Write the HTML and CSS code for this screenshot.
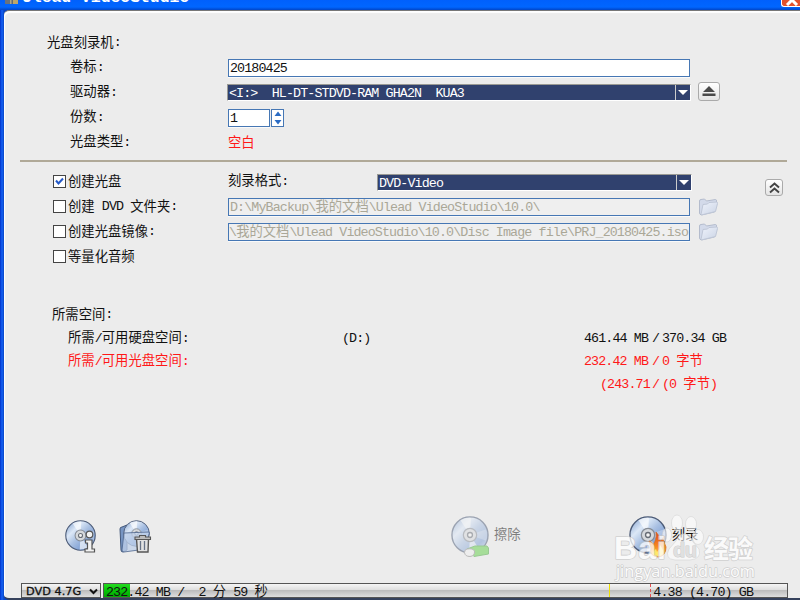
FILE: index.html
```html
<!DOCTYPE html>
<html lang="zh-CN">
<head>
  <meta charset="UTF-8" />
  <title>Ulead VideoStudio</title>
  <link rel="stylesheet" href="styles.css">
</head>
<body>

  <!-- shared disc artwork -->
  <svg class="defs" width="0" height="0">
    <defs>
      <linearGradient id="discFill" x1="0" y1="0" x2="1" y2="1">
        <stop offset="0" stop-color="#7697c9" />
        <stop offset=".3" stop-color="#dce8f7" />
        <stop offset=".5" stop-color="#a9c0e2" />
        <stop offset=".75" stop-color="#7c9ed4" />
        <stop offset="1" stop-color="#d6e3f5" />
      </linearGradient>
      <linearGradient id="folderFill" x1="0" y1="0" x2="1" y2="1">
        <stop offset="0" stop-color="#eef2fb" />
        <stop offset="1" stop-color="#cbd4e5" />
      </linearGradient>
      <linearGradient id="flame" x1="0" y1="0" x2="0" y2="1">
        <stop offset="0" stop-color="#d9481c" />
        <stop offset=".6" stop-color="#f98b1f" />
        <stop offset="1" stop-color="#ffd65a" />
      </linearGradient>
      <symbol id="disc" viewBox="0 0 40 40">
        <circle cx="20" cy="20" r="19" fill="url(#discFill)" stroke="#4c5b77" stroke-width="1.4" />
        <path d="M20 20 10 4.500Q15 1.500 21 2ZM20 20 30 35.500Q25 38 19 38Z" fill="#fff" opacity=".65" />
        <path d="M20 20 37 14Q39 20 37 26Z" fill="#fff" opacity=".3" />
        <circle cx="20" cy="20" r="7" fill="#d5d8dc" stroke="#858b95" stroke-width="1.300" />
        <circle cx="20" cy="20" r="2.600" fill="#f4f4f4" stroke="#666c75" stroke-width="1.400" />
      </symbol>
      <symbol id="folder" viewBox="0 0 20 18">
        <path d="M1 3Q1 1.500 2.500 1.500L6 1 8 3 17 1.500Q18 1.500 18 3V5L16 14 3 17Q1 16.500 1 15Z" fill="#d3daea" stroke="#b4bccd" />
        <path d="M4.500 6.500 9 6 10.500 4.500 18 4Q19.300 4 19 5.500L17 13.500 3.500 16.800Q2.500 16.800 2.700 15.500Z" fill="url(#folderFill)" stroke="#bfc7d7" />
      </symbol>
    </defs>
  </svg>

  <header class="titlebar">
    <div class="app-icon"></div>
    <div class="app-title">Ulead VideoStudio</div>
    <div class="close">
      <svg width="16" height="12" viewBox="0 0 16 12"><path d="M3 0 13 10M13 0 3 10" stroke="#fff" stroke-width="3" /></svg>
    </div>
  </header>

  <main class="panel">
    <section class="burner">
      <div class="row heading">光盘刻录机<i>:</i></div>
      <div class="row">
        <div class="label">卷标<i>:</i></div>
        <div class="field"><i>20180425</i></div>
      </div>
      <div class="row">
        <div class="label">驱动器<i>:</i></div>
        <div class="combo">
          <div class="combo-text"><i>&lt;I:&gt;  HL-DT-STDVD-RAM GHA2N  KUA3</i></div>
          <div class="combo-arrow"></div>
        </div>
        <div class="button eject">
          <svg width="14" height="11" viewBox="0 0 14 11"><path d="M7 0 13 6H1ZM.5 7.500h13v2.500H.5z" fill="#4a4a4a" /></svg>
        </div>
      </div>
      <div class="row">
        <div class="label">份数<i>:</i></div>
        <div class="field copies"><i>1</i></div>
        <div class="spinner">
          <svg width="8" height="14" viewBox="0 0 8 14"><path d="M4 .5 7.500 5H.5ZM4 13.500 7.500 9H.5Z" fill="#2a6bc4" /></svg>
        </div>
      </div>
      <div class="row">
        <div class="label">光盘类型<i>:</i></div>
        <div class="red">空白</div>
      </div>
    </section>

    <hr>

    <section class="output">
      <div class="row">
        <div class="check">
          <div class="box"><svg width="9" height="9" viewBox="0 0 9 9"><path d="M1 3.500 3.500 6.500 8 1.500" fill="none" stroke="#2459c8" stroke-width="2" /></svg></div>
          创建光盘
        </div>
        <div class="format-label">刻录格式<i>:</i></div>
        <div class="combo format">
          <div class="combo-text"><i>DVD-Video</i></div>
          <div class="combo-arrow"></div>
        </div>
        <div class="button collapse">
          <svg width="11" height="12" viewBox="0 0 11 12"><path d="M1 5.500 5.500 1.500 10 5.500M1 10.500 5.500 6.500 10 10.500" fill="none" stroke="#444" stroke-width="1.900" /></svg>
        </div>
      </div>
      <div class="row">
        <div class="check"><div class="box"></div>创建<i> DVD </i>文件夹<i>:</i></div>
        <div class="field disabled"><i>D:\MyBackup\</i>我的文档<i>\Ulead VideoStudio\10.0\</i></div>
        <svg class="folder" width="21" height="18"><use href="#folder" /></svg>
      </div>
      <div class="row">
        <div class="check"><div class="box"></div>创建光盘镜像<i>:</i></div>
        <div class="field disabled scrolled"><i>\</i>我的文档<i>\Ulead VideoStudio\10.0\Disc Image file\PRJ_20180425.iso</i></div>
        <svg class="folder" width="21" height="18"><use href="#folder" /></svg>
      </div>
      <div class="row">
        <div class="check"><div class="box"></div>等量化音频</div>
      </div>
    </section>

    <section class="space">
      <div class="space-row title">所需空间<i>:</i></div>
      <div class="space-row">
        <div class="space-name">所需<i>/</i>可用硬盘空间<i>:</i></div>
        <div class="drive"><i>(D:)</i></div>
        <div class="need"><i>461.44 MB</i></div>
        <div class="slash"><i>/</i></div>
        <div><i>370.34 GB</i></div>
      </div>
      <div class="space-row red">
        <div class="space-name">所需<i>/</i>可用光盘空间<i>:</i></div>
        <div class="drive"></div>
        <div class="need"><i>232.42 MB</i></div>
        <div class="slash"><i>/</i></div>
        <div><i>0 </i>字节</div>
      </div>
      <div class="space-row red">
        <div class="space-name"></div>
        <div class="drive"></div>
        <div class="need right"><i>(243.71</i></div>
        <div class="slash"><i>/</i></div>
        <div><i>(0 </i>字节<i>)</i></div>
      </div>
    </section>

    <section class="actions">
      <svg class="info" width="34" height="36" viewBox="0 0 34 36">
        <use href="#disc" x="1" y="1" width="31" height="31" />
        <g fill="#f2f2f2" stroke="#555" stroke-width="1.200">
          <circle cx="25.500" cy="15.500" r="3.300" />
          <path d="M21.500 21h6.500v9H30.500V33H21v-3H23.500V24H21.500Z" />
        </g>
      </svg>
      <svg class="clean" width="34" height="36" viewBox="0 0 34 36">
        <path d="M2 10Q2 8 4 8L9 6V31L5 33Q3 33 3 31Z" fill="#7795c3" stroke="#42577a" />
        <use href="#disc" x="5" y="1" width="27" height="27" />
        <path d="M6 14 31 13Q32 14 31 15L28 30 6 33Q4 33 4 31Z" fill="#bfd0ea" fill-opacity=".75" stroke="#4d658d" stroke-width=".8" />
        <path d="M18.500 20h12l-.5 13H19.500Z" fill="#e2e2e2" stroke="#555" stroke-width="1.400" />
        <path d="M17 20.500v-2.500h4.500V16.500h6v1.500H32.500v2.500Z" fill="#bcbcbc" stroke="#555" stroke-width="1.100" />
        <path d="M22.500 22v9M26.500 22v9" stroke="#667286" stroke-width="1.300" />
      </svg>
      <div class="erase">
        <svg width="41" height="42" viewBox="0 0 41 42">
          <use href="#disc" x="1" y="0" width="38" height="38" />
          <path d="M17 33 25 30 37 30 38.500 32V38L24 40.500Z" fill="#62d048" stroke="#47a83a" />
          <path d="M17 33Q23 32 24.500 35 25 40 20 40.500 15 40.500 14.500 36.500 14.500 33.500 17 33Z" fill="#eee" stroke="#888" />
        </svg>
        <span>擦除</span>
      </div>
      <div class="burn">
        <svg width="41" height="42" viewBox="0 0 41 42">
          <use href="#disc" x="1" y="0" width="38" height="38" />
          <path d="M21 25Q25 26 25 29 29 24 28 16 33 21 32 26L36 20Q35 26 38 31 38 40 30 41 21 40 23 32Z" fill="url(#flame)" stroke="#d76a24" stroke-width=".8" />
          <path d="M26 40Q24 36 28 33L29 36Q32 33 32 29 36 34 35 38 32 41 26 40Z" fill="#ffe76a" />
        </svg>
        <span>刻录</span>
      </div>
    </section>

    <footer class="status">
      <div class="disc-size">DVD 4.7G
        <svg width="9" height="7" viewBox="0 0 9 7"><path d="M1 1.500 4.500 5 8 1.500" fill="none" stroke="#111" stroke-width="2" /></svg>
      </div>
      <div class="meter">
        <div class="used"></div>
        <div class="mark yellow"></div>
        <div class="mark redline"></div>
        <div class="meter-text"><i>232.42 MB /  2 </i>分<i> 59 </i>秒</div>
        <div class="capacity"><i>4.38 (4.70) GB</i></div>
      </div>
    </footer>
  </main>

  <svg class="watermark" width="150" height="76" viewBox="610 510 150 76">
    <g class="paw">
      <ellipse cx="677" cy="523" rx="5.500" ry="8" />
      <ellipse cx="691" cy="524" rx="5.500" ry="7.500" />
      <ellipse cx="667" cy="535" rx="4.500" ry="7" />
      <ellipse cx="698" cy="537" rx="5.500" ry="7.500" />
      <path d="M684 534Q690 534 693 542L699 549Q702 559 690 560H675Q664 559 669 549L676 541Q679 534 684 534Z" />
    </g>
    <g class="logo">
      <text x="614" y="559" font-size="32" textLength="52">Bai</text>
      <text x="704" y="558" font-size="25" textLength="49">经验</text>
    </g>
    <text class="du" x="673" y="557" font-size="20" textLength="24">du</text>
    <text class="site" x="616" y="577" font-size="16" textLength="139" lengthAdjust="spacingAndGlyphs">jingyan.baidu.com</text>
  </svg>

</body>
</html>
```
FILE: styles.css
```css
* {
  box-sizing: border-box;
}

body {
  margin: 0;
  width: 800px;
  height: 600px;
  overflow: hidden;
  position: relative;
  display: flex;
  flex-direction: column;
  background: linear-gradient(to right, #0030c8, #1462f5 2px, #0844c4 4px);
  color: #111;
  font-family: "Liberation Sans", "Noto Sans CJK SC", sans-serif;
  font-size: 13.33px;
  line-height: 20px;
}

.defs {
  position: absolute;
}

/* latin text and digits */
i {
  font-family: "Liberation Mono", monospace;
  font-style: normal;
  letter-spacing: -0.88px;
  white-space: pre;
}

.titlebar {
  height: 10px;
  flex: none;
  display: flex;
  overflow: hidden;
  background: linear-gradient(#0060fc, #0066ff 70%, #0045c8);
}

.app-icon {
  width: 13px;
  height: 4px;
  margin-left: 5px;
  background: linear-gradient(to right, #68727e 35%, #d0c49a 35%, #55606c 60%, #bba66b 60%);
}

.app-title {
  margin: -12px 0 0 4px;
  color: #fff;
  font-family: "Liberation Mono", monospace;
  font-size: 16.4px;
  font-weight: bold;
}

.close {
  width: 19px;
  height: 7px;
  margin-left: auto;
  overflow: hidden;
  background: #e2512c;
  border: 1px solid #fff;
  border-width: 0 0 1px 1px;
  border-radius: 0 0 0 3px;
}

.close svg {
  display: block;
  margin: -5px 0 0 2px;
}

.panel {
  flex: 1;
  margin-left: 4px;
  display: flex;
  flex-direction: column;
  background: #ececec;
  border-top: 1px solid #777;
  border-bottom: 2px solid #35415c;
  border-radius: 5px 0 0 5px;
  box-shadow: inset 1px 2px 1px #fff;
}

.row {
  height: 25px;
  display: flex;
  align-items: center;
}

.burner {
  padding-top: 19px;
}

.heading {
  padding-left: 43px;
}

.label {
  width: 158px;
  margin-left: 66px;
}

.field {
  width: 462px;
  height: 18px;
  padding-left: 1px;
  overflow: hidden;
  white-space: nowrap;
  line-height: 16px;
  background: #fff;
  border: 1px solid #4677b4;
  box-shadow: 0 1px #fafafa;
}

.copies {
  width: 42px;
}

.spinner {
  width: 13px;
  height: 18px;
  margin-left: 1px;
  display: flex;
  align-items: center;
  justify-content: center;
  background: #fff;
  border: 1px solid #4677b4;
}

.combo {
  width: 464px;
  height: 17px;
  margin-left: -1px;
  display: flex;
  background: #30416e;
  border: 1px solid #9a9a94;
  border-right-color: #fff;
  border-bottom-color: #fff;
}

.burner .combo {
  margin-top: -1px;
}

.combo-text {
  flex: 1;
  padding-left: 1px;
  line-height: 16px;
  color: #fff;
}

.combo-arrow {
  width: 15px;
  border-left: 1px solid #ccc;
}

.combo-arrow::after {
  content: "";
  display: block;
  margin: 5px 0 0 2px;
  width: 0;
  border: 5px solid transparent;
  border-top: 5px solid #fff;
  border-bottom: 0;
}

.button {
  display: flex;
  align-items: center;
  justify-content: center;
  background: linear-gradient(#fff, #e4e4e4);
  border: 1px solid #aaa;
  border-radius: 3px;
}

.eject {
  width: 22px;
  height: 19px;
  margin: -2px 0 0 7px;
}

.red {
  color: #ff1818;
}

hr {
  width: 767px;
  height: 2px;
  flex: none;
  margin: 5px 0 7px 16px;
  border: 0;
  background: #b0a998;
}

.check {
  width: 175px;
  margin-left: 49px;
  display: flex;
  align-items: center;
}

.box {
  width: 13px;
  height: 13px;
  margin-right: 2px;
  display: flex;
  align-items: center;
  justify-content: center;
  background: #fff;
  border: 1px solid #444;
}

.format-label {
  width: 149px;
}

.format {
  width: 315px;
  margin: 2px 0 0;
}

.collapse {
  width: 18px;
  height: 17px;
  margin: 12px 0 0 73px;
}

.disabled {
  background: #efefef;
  color: #aaa797;
}

.scrolled {
  padding-left: 0;
}

.folder {
  margin-left: 8px;
}

.space {
  margin-top: 34px;
}

.space-row {
  height: 23px;
  padding-left: 64px;
  display: flex;
  align-items: center;
}

.space-row.title {
  height: 24px;
  padding-left: 48px;
}

.space-name {
  width: 274px;
}

.drive {
  width: 242px;
}

.need {
  width: 66px;
}

.right {
  padding-left: 16px;
}

.slash {
  width: 12px;
  padding-left: 2px;
}

.actions {
  height: 46px;
  margin-top: 118px;
  padding-left: 60px;
  display: flex;
  align-items: center;
}

.clean {
  margin-left: 20px;
}

.erase,
.burn {
  display: flex;
  align-items: center;
  gap: 3px;
}

.erase span,
.burn span {
  margin-top: -5px;
}

.erase {
  margin-left: 298px;
  opacity: .5;
}

.burn {
  margin-left: 107px;
}

.status {
  height: 15px;
  margin: auto 12px 0 17px;
  display: flex;
  gap: 2px;
}

.disc-size,
.meter {
  background: linear-gradient(#f5f5f5, #dedede 45%, #bdbdbd 50%, #dedede);
  border: 1px solid #555;
}

.disc-size {
  width: 80px;
  padding: 2px 2px 0 4px;
  display: flex;
  align-items: center;
  justify-content: space-between;
  font-family: "DejaVu Sans", sans-serif;
  font-size: 11.3px;
  white-space: nowrap;
  -webkit-text-stroke: .3px #111;
}

.meter {
  flex: 1;
  position: relative;
  display: flex;
  justify-content: space-between;
  line-height: 15px;
}

.meter-text,
.capacity {
  position: relative;
}

.meter-text {
  padding-left: 2px;
}

.capacity {
  padding-right: 34px;
}

.used {
  position: absolute;
  left: 0;
  top: 0;
  width: 26px;
  height: 13px;
  background: linear-gradient(#24da20, #08c808 45%, #04a804);
}

.mark {
  position: absolute;
  top: 0;
  height: 13px;
}

.yellow {
  left: 505px;
  border-left: 1px solid #f0e000;
}

.redline {
  left: 546px;
  border-left: 1px dashed #e65050;
}

.watermark {
  position: absolute;
  left: 610px;
  top: 510px;
}

.paw {
  fill: #fff;
  fill-opacity: .6;
  stroke: #d4d4d4;
  stroke-width: .6px;
}

.watermark text {
  fill: #fff;
  stroke: #c8c8c8;
  stroke-width: 1.6px;
  stroke-linejoin: round;
  paint-order: stroke;
}

.logo {
  font-weight: bold;
  opacity: .75;
}

.watermark .du {
  fill: #ddd;
  stroke: #c4c4c4;
  stroke-width: 1px;
  font-weight: bold;
  opacity: .85;
}

.watermark .site {
  font-family: "Open Sans", sans-serif;
  stroke-width: 1.4px;
  opacity: .85;
}
```
